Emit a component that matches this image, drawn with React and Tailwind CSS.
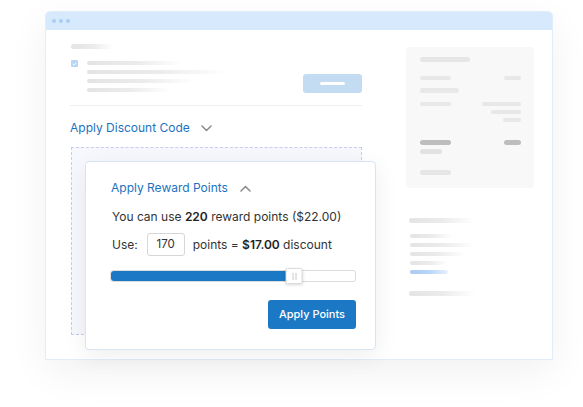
import React from "react";

const Bar = ({ w, h = 4, c = "bg-[#ebebeb]", fade = false, className = "" }) => (
  <div
    className={`${h === 5 ? "h-[5px]" : "h-[4px]"} rounded-full ${
      fade ? "bg-gradient-to-r from-[#e4e4e4] via-[#ebebeb] to-transparent" : c
    } ${className}`}
    style={{ width: w }}
  />
);

const ChevronDown = () => (
  <svg width="11" height="7" viewBox="0 0 11 7" fill="none">
    <path d="M1 1l4.5 4.5L10 1" stroke="#8a8a8a" strokeWidth="1.5" strokeLinecap="round" strokeLinejoin="round" />
  </svg>
);

const ChevronUp = () => (
  <svg width="11" height="7" viewBox="0 0 11 7" fill="none">
    <path d="M1 6l4.5-4.5L10 6" stroke="#8a8a8a" strokeWidth="1.5" strokeLinecap="round" strokeLinejoin="round" />
  </svg>
);

const App = () => {
  const pct = 75;

  return (
    <div className="relative w-[583px] h-[407px] overflow-hidden bg-white font-['Inter',sans-serif]">
      {/* browser window */}
      <div className="ml-[45px] mt-[11px] w-[508px] h-[349px] rounded-t-[5px] border border-[#e2edfa] bg-white shadow-[0_12px_40px_rgba(0,0,0,0.06)] flex flex-col">
        <div className="h-[18px] rounded-t-[4px] bg-[#d7e9fc] flex items-center gap-[3px] pl-[6px]">
          <span className="w-[4px] h-[4px] rounded-full bg-[#a9cdf3]" />
          <span className="w-[4px] h-[4px] rounded-full bg-[#a9cdf3]" />
          <span className="w-[4px] h-[4px] rounded-full bg-[#a9cdf3]" />
        </div>

        <div className="flex pl-[24px] pr-[18px] pt-[14px] gap-[44px]">
          {/* left column */}
          <div className="w-[292px] flex flex-col">
            <Bar w={43} h={5} fade className="ml-[1px]" />
            <div className="mt-[11px] flex items-start">
              <div className="ml-[1px] w-[7px] h-[7px] rounded-[1px] bg-[#b8d4f6] flex items-center justify-center">
                <svg width="5" height="4" viewBox="0 0 5 4" fill="none">
                  <path d="M0.6 2l1.3 1.2L4.4 0.7" stroke="white" strokeWidth="1" />
                </svg>
              </div>
              <div className="ml-[9px] mt-[1px] flex flex-col gap-[5px]">
                <Bar w={96} fade />
                <Bar w={141} fade />
                <Bar w={108} fade />
                <Bar w={83} fade />
              </div>
              <div className="ml-auto mt-[14px] w-[59px] h-[19px] rounded-[3px] bg-[#c4dcf1] flex items-center justify-center">
                <div className="w-[25px] h-[3px] rounded-full bg-white" />
              </div>
            </div>
            <div className="mt-[12px] h-px bg-[#eeeeee]" />
            <div className="mt-[14px] flex items-center gap-[11px] h-[16px]">
              <span className="text-[12px] text-[#1c72bf]">Apply Discount Code</span>
              <ChevronDown />
            </div>
            <div className="mt-[11px] ml-[1px] h-[188px] border border-dashed border-[#c9cbf0] bg-[#f7f8fe]" />
          </div>

          {/* right column */}
          <div className="w-[128px] flex flex-col">
            <div className="mt-[3px] h-[141px] rounded-[4px] bg-[#f8f8f8] pl-[14px] pr-[13px] pt-[10px] flex flex-col">
              <Bar w={50} h={5} c="bg-[#e6e6e6]" />
              <div className="mt-[14px] flex justify-between">
                <Bar w={31} c="bg-[#e8e8e8]" />
                <Bar w={17} c="bg-[#e8e8e8]" />
              </div>
              <Bar w={39} h={5} c="bg-[#e8e8e8]" className="mt-[8px]" />
              <div className="mt-[9px] flex justify-between items-start">
                <Bar w={31} c="bg-[#e8e8e8]" />
                <div className="flex flex-col items-end gap-[4px]">
                  <Bar w={39} c="bg-[#e8e8e8]" />
                  <Bar w={30} c="bg-[#e8e8e8]" />
                  <Bar w={18} c="bg-[#e8e8e8]" />
                </div>
              </div>
              <div className="mt-[18px] flex justify-between">
                <Bar w={31} h={5} c="bg-[#bdbdbd]" />
                <Bar w={17} h={5} c="bg-[#bdbdbd]" />
              </div>
              <Bar w={22} h={5} c="bg-[#e2e2e2]" className="mt-[4px]" />
              <Bar w={31} h={5} c="bg-[#e6e6e6]" className="mt-[16px]" />
            </div>
            <div className="mt-[30px] pl-[3px] flex flex-col">
              <Bar w={66} h={5} fade />
              <div className="mt-[11px] ml-[1px] flex flex-col gap-[5px]">
                <Bar w={43} fade />
                <Bar w={65} fade />
                <Bar w={55} fade />
                <Bar w={38} fade />
                <div className="h-[4px] w-[38px] rounded-full bg-gradient-to-r from-[#a9cbf7] via-[#b9d5f8] to-[#e8f1fd]" />
              </div>
              <Bar w={66} h={5} fade className="mt-[17px]" />
            </div>
          </div>
        </div>
      </div>

      {/* reward points popover */}
      <div className="absolute left-[85px] top-[161px] w-[291px] h-[189px] rounded-[4px] border border-[#d9e4f3] bg-white shadow-[0_6px_24px_rgba(0,0,0,0.07)] pl-[24px] pr-[19px] pt-[18px] flex flex-col">
        <div className="ml-[1px] flex items-center gap-[12px] h-[16px]">
          <span className="text-[12px] text-[#1c72bf]">Apply Reward Points</span>
          <ChevronUp />
        </div>
        <p className="mt-[13px] ml-[2px] text-[12px] leading-[16px] text-[#333]">
          You can use <b className="font-semibold text-[#222]">220</b> reward points ($22.00)
        </p>
        <div className="mt-[8px] ml-[2px] flex items-center text-[12px] text-[#333]">
          <span>Use:</span>
          <div className="ml-[9px] w-[38px] h-[23px] rounded-[3px] border border-[#d6d6d6] flex items-center justify-center text-[11.5px]">
            170
          </div>
          <span className="ml-[8px]">
            points = <b className="font-semibold text-[#222]">$17.00</b> discount
          </span>
        </div>
        <div className="relative mt-[14px] h-[12px] rounded-[3px] border border-[#dcdcdc] bg-white">
          <div className="h-full rounded-l-[3px] bg-[#1b78c4]" style={{ width: `${pct}%` }} />
          <div
            className="absolute top-[-3px] w-[17px] h-[16px] -translate-x-1/2 rounded-[2px] border border-[#dcdcdc] bg-white shadow-[0_1px_3px_rgba(0,0,0,0.15)] flex items-center justify-center gap-[2px]"
            style={{ left: `${pct}%` }}
          >
            <span className="w-px h-[7px] bg-[#c8c8c8]" />
            <span className="w-px h-[7px] bg-[#c8c8c8]" />
          </div>
        </div>
        <div className="mt-[18px] flex justify-end">
          <button className="w-[88px] h-[29px] rounded-[3px] bg-[#1b78c4] text-white text-[11px] font-medium">
            Apply Points
          </button>
        </div>
      </div>
    </div>
  );
};

export default App;
